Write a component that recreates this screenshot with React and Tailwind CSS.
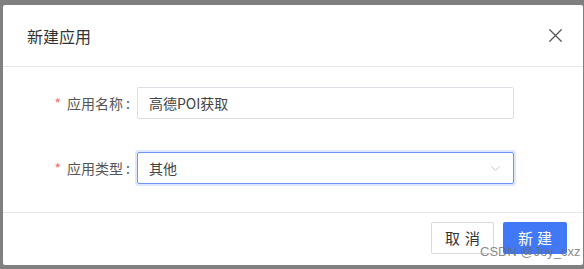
import { X, ChevronDown } from "lucide-react";

const font = { fontFamily: '"Noto Sans CJK SC", "Noto Sans", sans-serif' };

const Field = ({ label, children }) => (
  <div className="flex items-center">
    <div className="w-[134px] flex justify-end items-center pr-[7px] text-[14px] text-[#555]">
      <span className="text-[#f56c6c] mr-[6px] text-[14px]">*</span>
      {label}
      <span className="ml-[3px]">:</span>
    </div>
    {children}
  </div>
);

export default function App() {
  return (
    <div
      className="w-[584px] h-[269px] bg-[#808080] pl-[3px] pr-[1px] pt-[5px] pb-[4px] relative"
      style={font}
    >
      <div className="w-[580px] h-[260px] bg-white rounded-[2px] flex flex-col">
        <div className="h-[62px] flex items-center justify-between pl-[24px] pr-[16px] border-b border-[#e6e6e6]">
          <span className="text-[16px] text-[#333]">新建应用</span>
          <X className="w-[23px] h-[23px] text-[#555]" strokeWidth={1.3} />
        </div>

        <div className="h-[146px] pt-[20px] flex flex-col gap-[33px] border-b border-[#e6e6e6]">
          <Field label="应用名称">
            <div className="w-[377px] h-[32px] border border-[#dcdfe6] rounded-[2px] flex items-center px-[11px] text-[14px] text-[#444]">
              高德POI获取
            </div>
          </Field>
          <Field label="应用类型">
            <div className="w-[377px] h-[32px] border border-[#6f96f4] rounded-[2px] flex items-center justify-between pl-[11px] pr-[10px] text-[14px] text-[#444] shadow-[0_0_0_2px_rgba(64,120,246,0.18)]">
              <span>其他</span>
              <ChevronDown className="w-[15px] h-[15px] text-[#c0c4cc]" strokeWidth={1.5} />
            </div>
          </Field>
        </div>

        <div className="flex-1 flex items-center justify-end gap-[9px] pr-[16px] pb-[2px]">
          <button className="w-[63px] h-[32px] border border-[#d9d9d9] rounded-[2px] bg-white text-[15px] text-[#333] tracking-[5px] pl-[5px]">
            取消
          </button>
          <button className="w-[64px] h-[32px] rounded-[2px] bg-[#4078f6] text-[15px] text-white tracking-[4px] pl-[4px]">
            新建
          </button>
        </div>
      </div>

      <span
        className="absolute z-10 left-[480px] top-[245px] text-[13px] text-[#6b6b6b]/80 leading-none"
        style={{ fontFamily: '"Liberation Sans", sans-serif' }}
      >
        CSDN @Joy_cxz
      </span>
    </div>
  );
}
